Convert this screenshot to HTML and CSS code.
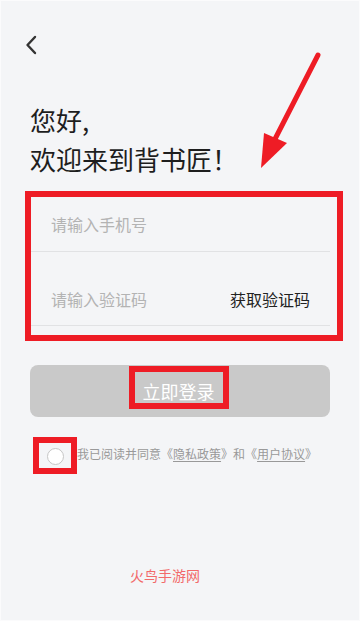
FILE: index.html
```html
<!DOCTYPE html>
<html lang="zh-CN">
<head>
    <meta charset="UTF-8">
    <meta name="viewport" content="width=device-width, initial-scale=1.0">
    <title>登录 - 背书匠</title>
    <link rel="stylesheet" href="styles.css">
</head>
<body>
    <div class="page">
        <div class="top-bar">
            <svg class="back" width="12" height="20" viewBox="0 0 12 20">
                <path d="M10 2 L2.5 10 L10 18" fill="none" stroke="#333" stroke-width="2.4" stroke-linecap="round" stroke-linejoin="round"/>
            </svg>
        </div>

        <h1 class="welcome">您好,<br>欢迎来到背书匠！</h1>

        <div class="form-box mark">
            <div class="field">
                <input type="tel" placeholder="请输入手机号">
            </div>
            <div class="field field-code">
                <input type="text" placeholder="请输入验证码">
                <span class="get-code">获取验证码</span>
            </div>
        </div>

        <button class="login-btn"><span class="login-text mark">立即登录</span></button>

        <div class="agree">
            <span class="check-wrap mark"><span class="check"></span></span>
            <span class="agree-text">我已阅读并同意《<u>隐私政策</u>》和《<u>用户协议</u>》</span>
        </div>

        <div class="watermark">火鸟手游网</div>

        <!-- annotation arrow pointing at the form -->
        <svg class="arrow" width="360" height="200" viewBox="0 0 360 200">
            <line x1="318" y1="55" x2="274" y2="141" stroke="#ee1c25" stroke-width="5" stroke-linecap="round"/>
            <polygon points="261,168 264,133 287,143" fill="#ee1c25"/>
        </svg>
    </div>
</body>
</html>
```

FILE: styles.css
```css
body {
    margin: 0;
    padding: 0;
    background-color: #f4f5f7;
    font-family: "Noto Sans CJK SC", "Noto Sans", sans-serif;
    color: #222;
}

.page {
    position: relative;
    width: 358px;
    height: 619px;
    border: 1px solid #fbfbfc;
    overflow: hidden;
}

.top-bar {
    padding: 34px 0 0 24px;
    height: 20px;
}

.back {
    display: block;
}

.welcome {
    margin: 45px 0 0 29px;
    font-size: 26px;
    font-weight: 400;
    line-height: 39px;
    color: #1e1e1e;
}

/* red annotation frames */
.mark {
    border: 6px solid #ee1c25;
}

.form-box {
    margin: 13px 0 0 24px;
    width: 299px;
    padding: 0 7px 9px 0;
}

.field {
    display: flex;
    align-items: center;
    height: 54px;
    padding-left: 20px;
    border-bottom: 1px solid #e1e2e4;
}

.field-code {
    height: 53px;
    margin-top: 20px;
    padding-right: 20px;
}

.field input {
    flex: 1;
    min-width: 0;
    border: none;
    background: transparent;
    padding: 0;
    font-family: inherit;
    font-size: 16px;
    color: #222;
    outline: none;
}

.field input::placeholder {
    color: #b3b3b3;
}

.get-code {
    font-size: 16px;
    color: #222;
}

.login-btn {
    display: flex;
    justify-content: center;
    align-items: flex-start;
    margin: 24px 0 0 29px;
    width: 300px;
    height: 52px;
    padding: 1px 3px 0 0;
    border: none;
    border-radius: 8px;
    background-color: #c9c9c9;
    font-family: inherit;
}

.login-text {
    display: block;
    padding: 7px 8px 0;
    height: 24px;
    line-height: 24px;
    font-size: 18px;
    color: #fff;
}

.agree {
    display: flex;
    align-items: center;
    margin: 20px 0 0 32px;
}

.check-wrap {
    display: flex;
    justify-content: center;
    align-items: center;
    width: 32px;
    height: 23px;
    padding-top: 2px;
    box-sizing: content-box;
}

.check {
    width: 15px;
    height: 15px;
    border: 1.5px solid #c6c6c6;
    border-radius: 50%;
    background-color: #fff;
}

.agree-text {
    font-size: 12px;
    line-height: 16px;
    color: #999;
    margin-top: -3px;
}

.agree-text u {
    text-decoration-color: #999;
    text-underline-offset: 2px;
}

.watermark {
    margin: 91px 0 0 129px;
    font-size: 14px;
    line-height: 20px;
    color: #f26a6a;
}

.arrow {
    position: absolute;
    top: -1px;
    left: -1px;
    pointer-events: none;
}
```
